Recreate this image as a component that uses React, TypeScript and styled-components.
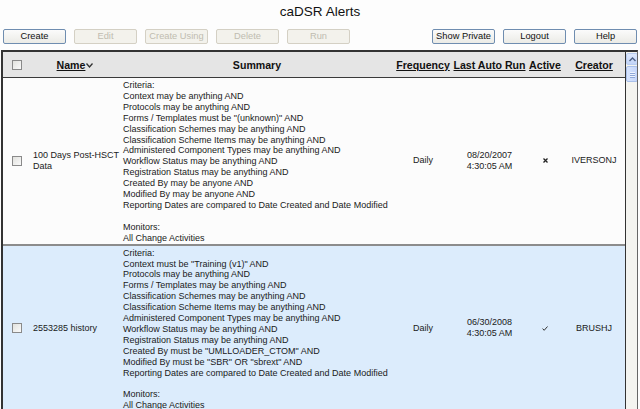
import React from "react";
import styled, { createGlobalStyle } from "styled-components";

const Global = createGlobalStyle`
  html, body { margin: 0; padding: 0; height: 100%; overflow: hidden; background: #fdfdfd; }
  body { font-family: "Liberation Sans", Arial, sans-serif; color: #1a1a1a; }
  #root { height: 100%; }
`;

const Page = styled.div`
  height: 409px;
  display: flex;
  flex-direction: column;
`;

const Title = styled.h1`
  margin: 0;
  height: 26px;
  line-height: 24px;
  text-align: center;
  font-size: 13.5px;
  font-weight: normal;
  color: #111;
  flex-shrink: 0;
`;

const Toolbar = styled.div`
  margin-top: 3px;
  padding: 0 3px;
  display: flex;
  justify-content: space-between;
  height: 15px;
  flex-shrink: 0;
`;

const Group = styled.div`
  display: flex;
  gap: 8px;
`;

const Button = styled.button<{ disabled?: boolean }>`
  width: 63px;
  height: 15px;
  padding: 0;
  font-family: "Liberation Sans", Arial, sans-serif;
  font-size: 9.3px;
  line-height: 13px;
  border-radius: 2px;
  border: 1px solid ${(p) => (p.disabled ? "#d4d0c4" : "#6f8db0")};
  background: ${(p) => (p.disabled ? "#f3f2ec" : "linear-gradient(#fbfbfb, #ebebe6)")};
  color: ${(p) => (p.disabled ? "#c0bcb0" : "#111")};
`;

const Frame = styled.div`
  margin: 6px 0 0 1px;
  width: 634px;
  flex: 1;
  min-height: 0;
  display: flex;
  border-top: 2px solid #333;
  border-left: 2px solid #333;
  border-right: 1px solid #666;
  overflow: hidden;
`;

const TableArea = styled.div`
  width: 622px;
  border-right: 1px solid #333;
  display: flex;
  flex-direction: column;
`;

const cols = "27px 90px 274px 58px 75px 36px 62px";

const HeaderRow = styled.div`
  display: grid;
  grid-template-columns: ${cols};
  height: 25px;
  flex-shrink: 0;
  align-items: center;
  background: #e5e5e5;
  border-bottom: 1px solid #3a3a3a;
  font-size: 10.6px;
  font-weight: bold;
  color: #111;
`;

const HeadCell = styled.div<{ $link?: boolean; $start?: boolean }>`
  white-space: nowrap;
  text-decoration: ${(p) => (p.$link ? "underline" : "none")};
  display: flex;
  justify-content: ${(p) => (p.$start ? "flex-start" : "center")};
  align-items: center;
`;

const Row = styled.div<{ $alt?: boolean }>`
  display: grid;
  grid-template-columns: ${cols};
  align-items: center;
  background: ${(p) => (p.$alt ? "#dcecfc" : "#fcfcfc")};
  border-bottom: 2px solid #8c8c8c;
  font-size: 9px;
  color: #1a1a1a;
  flex-shrink: 0;
`;

const Cell = styled.div<{ $start?: boolean; $stack?: boolean }>`
  padding: ${(p) => (p.$start ? "0" : "0 3px")};
  line-height: 10.9px;
  display: flex;
  flex-direction: ${(p) => (p.$stack ? "column" : "row")};
  align-items: center;
  justify-content: ${(p) => (p.$start ? "flex-start" : "center")};
  white-space: nowrap;
`;

const NameCell = styled.div`
  padding: 0 3px;
  line-height: 10.9px;
  white-space: nowrap;
`;

const Summary = styled.div`
  padding: 2px 3px 0;
  line-height: 10.9px;
  white-space: nowrap;
`;

const Box = styled.span`
  display: inline-block;
  width: 8px;
  height: 8px;
  border: 1px solid #8a8a8a;
  background: linear-gradient(135deg, #e2e2de, #fafafa);
  margin-left: 9px;
`;

const Scrollbar = styled.div`
  flex: 1;
  background: #f4f4f0;
  display: flex;
  flex-direction: column;
  align-items: center;
  padding-top: 1px;
  gap: 1px;
`;

const ScrollBtn = styled.div`
  width: 10px;
  height: 10px;
  border: 1px solid #b9cdf0;
  border-radius: 2px;
  background: linear-gradient(#dfe9fd, #c2d4f8);
  display: flex;
  align-items: center;
  justify-content: center;
`;

const Thumb = styled.div`
  width: 10px;
  height: 14px;
  border: 1px solid #a9c0ea;
  border-radius: 2px;
  background: linear-gradient(90deg, #d6e3fd, #c5d6fa);
  display: flex;
  flex-direction: column;
  align-items: center;
  justify-content: center;
  gap: 1px;
`;

const Grip = styled.span`
  width: 5px;
  height: 1px;
  background: #eef3fe;
  box-shadow: 0 1px 0 #8fa8d8;
`;

const Underlined = styled.span`
  text-decoration: underline;
`;

const SortArrow = () => (
  <svg width="7" height="5" viewBox="0 0 7 5" style={{ marginLeft: 1, marginTop: 2 }}>
    <path d="M0.5 0.5 L3.5 4 L6.5 0.5" fill="none" stroke="#333" strokeWidth="1.3" />
  </svg>
);

const Cross = () => (
  <svg width="5" height="5" viewBox="0 0 5 5">
    <path d="M0.5 0.5 L4.5 4.5 M4.5 0.5 L0.5 4.5" stroke="#222" strokeWidth="1.3" />
  </svg>
);

const Check = () => (
  <svg width="6" height="5" viewBox="0 0 6 5">
    <path d="M0.6 2.6 L2.2 4.3 L5.5 0.5" fill="none" stroke="#333" strokeWidth="1" />
  </svg>
);

type Alert = {
  name: string[];
  criteria: string[];
  frequency: string;
  date: string;
  time: string;
  active: boolean;
  creator: string;
};

const alerts: Alert[] = [
  {
    name: ["100 Days Post-HSCT", "Data"],
    criteria: [
      "Context may be anything AND",
      "Protocols may be anything AND",
      'Forms / Templates must be "(unknown)" AND',
      "Classification Schemes may be anything AND",
      "Classification Scheme Items may be anything AND",
      "Administered Component Types may be anything AND",
      "Workflow Status may be anything AND",
      "Registration Status may be anything AND",
      "Created By may be anyone AND",
      "Modified By may be anyone AND",
      "Reporting Dates are compared to Date Created and Date Modified",
    ],
    frequency: "Daily",
    date: "08/20/2007",
    time: "4:30:05 AM",
    active: false,
    creator: "IVERSONJ",
  },
  {
    name: ["2553285 history"],
    criteria: [
      'Context must be "Training (v1)" AND',
      "Protocols may be anything AND",
      "Forms / Templates may be anything AND",
      "Classification Schemes may be anything AND",
      "Classification Scheme Items may be anything AND",
      "Administered Component Types may be anything AND",
      "Workflow Status may be anything AND",
      "Registration Status may be anything AND",
      'Created By must be "UMLLOADER_CTOM" AND',
      'Modified By must be "SBR" OR "sbrext" AND',
      "Reporting Dates are compared to Date Created and Date Modified",
    ],
    frequency: "Daily",
    date: "06/30/2008",
    time: "4:30:05 AM",
    active: true,
    creator: "BRUSHJ",
  },
];

export default function App() {
  return (
    <Page>
      <Global />
      <Title>caDSR Alerts</Title>
      <Toolbar>
        <Group>
          <Button>Create</Button>
          <Button disabled>Edit</Button>
          <Button disabled>Create Using</Button>
          <Button disabled>Delete</Button>
          <Button disabled>Run</Button>
        </Group>
        <Group>
          <Button>Show Private</Button>
          <Button>Logout</Button>
          <Button>Help</Button>
        </Group>
      </Toolbar>
      <Frame>
        <TableArea>
          <HeaderRow>
            <HeadCell $start>
              <Box />
            </HeadCell>
            <HeadCell>
              <Underlined>Name</Underlined>
              <SortArrow />
            </HeadCell>
            <HeadCell>Summary</HeadCell>
            <HeadCell $link>Frequency</HeadCell>
            <HeadCell $link>Last Auto Run</HeadCell>
            <HeadCell $link>Active</HeadCell>
            <HeadCell $link>Creator</HeadCell>
          </HeaderRow>
          {alerts.map((a, i) => (
            <Row key={a.creator} $alt={i % 2 === 1}>
              <Cell $start>
                <Box />
              </Cell>
              <NameCell>
                {a.name.map((n) => (
                  <div key={n}>{n}</div>
                ))}
              </NameCell>
              <Summary>
                <div>Criteria:</div>
                {a.criteria.map((c) => (
                  <div key={c}>{c}</div>
                ))}
                <div>&nbsp;</div>
                <div>Monitors:</div>
                <div>All Change Activities</div>
              </Summary>
              <Cell>{a.frequency}</Cell>
              <Cell $stack>
                <span>{a.date}</span>
                <span>{a.time}</span>
              </Cell>
              <Cell>{a.active ? <Check /> : <Cross />}</Cell>
              <Cell>{a.creator}</Cell>
            </Row>
          ))}
        </TableArea>
        <Scrollbar>
          <ScrollBtn>
            <svg width="7" height="5" viewBox="0 0 7 5">
              <path d="M0.5 4 L3.5 1 L6.5 4" fill="none" stroke="#4d6185" strokeWidth="1.4" />
            </svg>
          </ScrollBtn>
          <Thumb>
            <Grip />
            <Grip />
            <Grip />
          </Thumb>
        </Scrollbar>
      </Frame>
    </Page>
  );
}
